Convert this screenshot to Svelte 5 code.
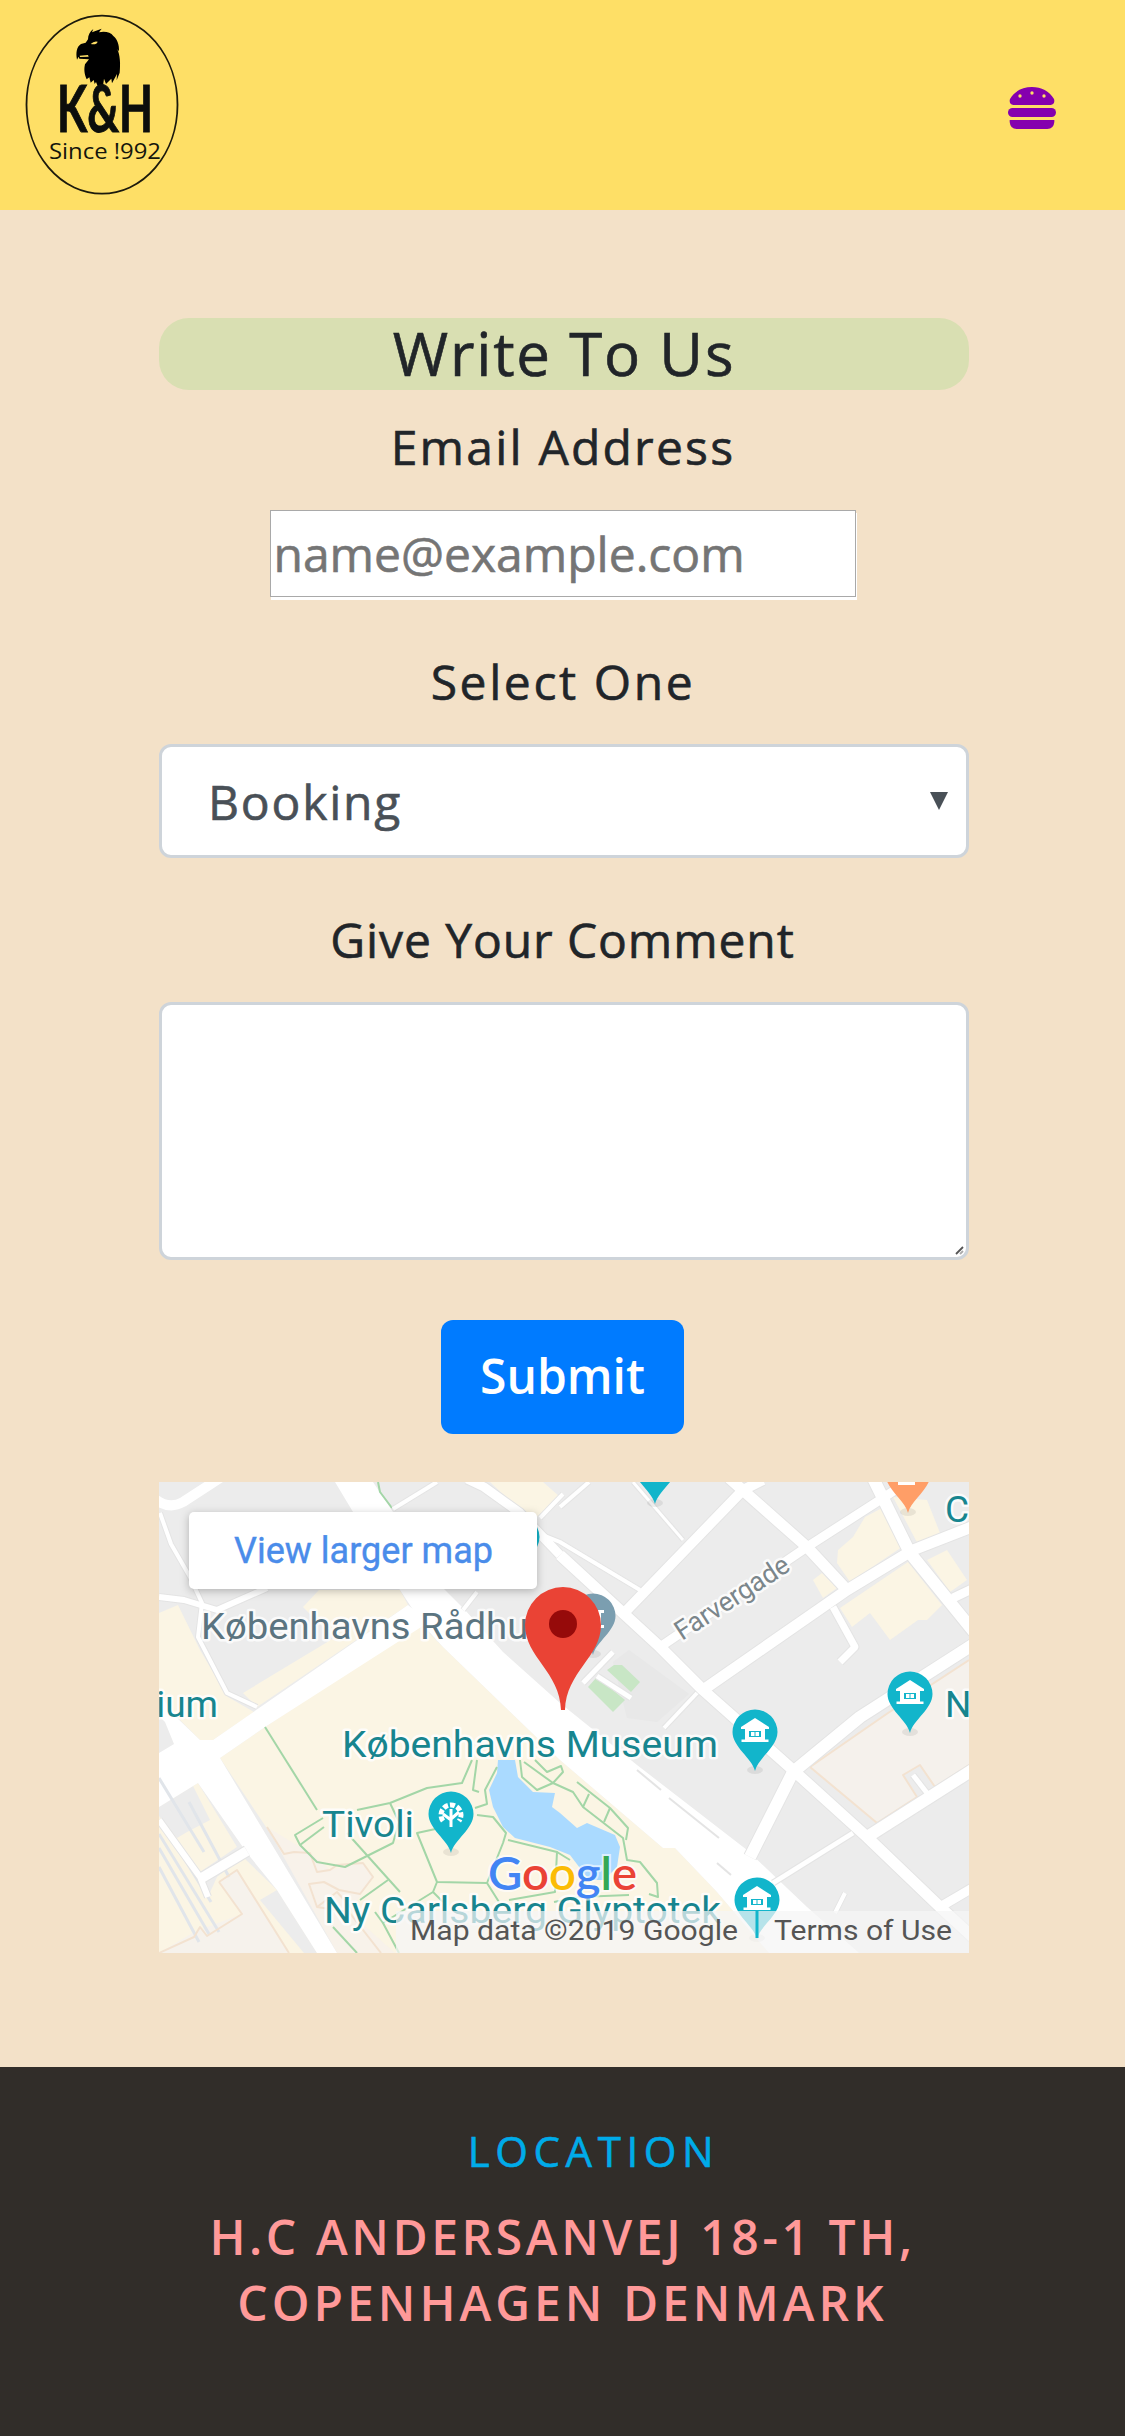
<script>
  let email = $state('');
  let comment = $state('');

  // Filled blocks of the map: colour and outline
  const blocks = [
    ['#fbf5e4', '262,143 106,245 61,276 191,471 610,471 558,410 516,366 504,366 401,278 284,165'],
    ['#fbf5e4', '84,211 175,156 144,125 160,108 241,108 249,123 98,225'],
    ['#fbf5e4', '0,131 19,123 41,168 69,215 95,230 54,258 41,258 21,238 0,212'],
    ['#fbf5e4', '0,325 39,301 78,365 41,390 0,338'],
    ['#ececec', '0,325 34,304 51,338 28,350 18,356 0,334'],
    ['#fbf5e4', '0,345 41,395 49,415 58,395 84,375 118,408 158,471 0,471'],
    ['#f6f2ec', '60,400 78,388 130,471 0,471 35,450 83,432'],
    ['#ececec', '101,418 118,408 158,471 145,471'],
    ['#f8f2ea', '108,345 151,371 171,388 204,381 214,395 190,430 236,471 178,471'],
    ['#fbf5e4', '331,0 384,0 401,15 381,35 361,28'],
    ['#fbf5e4', '723,26 743,65 691,100 678,81 679,68 694,55 706,35'],
    ['#fbf5e4', '734,15 768,18 781,51 761,66'],
    ['#fbf5e4', '768,78 788,68 808,98 791,110'],
    ['#fbf5e4', '681,126 749,80 783,123 768,138 759,138 731,158 711,131 693,145'],
    ['#fbf5e4', '654,98 663,91 678,106 664,116'],
    ['#f5f1ec', '651,285 729,231 810,178 810,283 776,305 761,283 744,293 758,315 718,341'],
    ['#e8e8e8', '454,180 470,168 530,212 498,240 468,236'],
    ['#fff', '176,0 214,0 234,30 283,105 306,128 344,170 401,221 478,283 588,368 648,425 700,471 610,471 558,410 516,366 504,366 401,278 284,165 264,143 241,108'],
    ['#fff', '249,123 54,258 41,258 15,233 0,210 0,325 39,301 88,371 118,408 158,471 178,471 61,276 106,245 270,140'],
    ['#ececec', '0,234 6,240 15,262 0,271'],
    ['#c8e6c5', '448,188 455,183 463,183 481,200 472,210'],
    ['#c8e6c5', '429,205 438,195 466,218 454,230'],
    ['#aadaff', '339,278 356,278 359,295 374,310 396,311 393,325 401,331 418,346 428,341 456,353 461,365 458,385 445,398 430,398 411,373 391,365 356,356 344,345 334,325 330,308 338,291']
  ];

  // Streets: width and points
  const streets = [
    [4, '1,31 12,62 31,95 43,121 39,155 68,211 98,225'],
    [6, '0,115 25,118 58,128 108,106'],
    [4, '278,0 234,27'],
    [9, '308,-3 325,5 361,31 401,73'],
    [11, '401,73 501,165 544,208 634,288 708,355 781,425 830,470'],
    [4, '404,12 381,36'],
    [4, '381,52 401,60 481,108'],
    [4, '401,25 430,0'],
    [3, '474,0 524,58'],
    [10, '468,128 584,8 604,-2'],
    [11, '570,-4 648,65 688,108'],
    [9, '501,165 648,65 724,16 754,-4'],
    [12, '714,-4 751,71 815,150'],
    [11, '544,208 688,108 754,68 815,44'],
    [9, '794,116 815,106'],
    [7, '674,125 696,165 681,180'],
    [12, '815,162 701,235 634,290 591,375'],
    [12, '708,355 815,287'],
    [5, '694,351 614,401'],
    [9, '781,425 815,405'],
    [4, '686,411 676,431'],
    [5, '754,293 768,311'],
    [5, '454,170 424,201'],
    [4, '538,211 505,246'],
    [4, '318,110 304,128'],
    [10, '88,369 41,397'],
    [6, '0,338 41,395 49,415'],
    [5, '438,194 472,216']
  ];

  // Footpaths in the gardens
  const paths = [
    '219,0 221,10 233,26',
    '106,245 158,328',
    '164,336 136,353 141,363 158,380 186,385 234,361 240,340',
    '141,363 165,345',
    '198,328 231,321 268,306 303,301 313,278',
    '231,321 240,340',
    '318,278 314,308 320,310',
    '188,351 241,410',
    '281,346 258,351 278,400 328,401',
    '201,418 229,398',
    '278,400 274,410 224,441 240,471',
    '224,441 216,430',
    '274,410 284,420',
    '318,333 334,335 347,351 344,361 328,401 340,420',
    '316,326 328,322 326,308 338,285',
    '349,358 398,370 396,410 350,418',
    '398,370 411,378',
    '174,445 198,471',
    '361,278 363,295 378,308 394,301 404,290 402,284 388,290 376,278',
    '394,301 414,310 424,325 464,356 468,378 481,380 498,401 499,415 490,412',
    '365,280 394,301',
    '418,300 451,326 469,346 467,358',
    '430,312 424,325',
    '451,326 445,340',
    '395,420 420,415 470,413'
  ];

  const outlines = [
    '651,285 729,231 810,178',
    '651,285 718,341 758,315 744,293 761,283 776,305 810,283',
    '60,400 83,432 48,454 41,445 35,455 0,471',
    '60,400 78,388 130,471',
    '108,345 125,372 135,370 151,371 158,390 171,388 178,383 204,381 214,395 201,412 180,408 165,400 150,402 158,425 190,430 222,471',
    '158,425 178,410 205,440'
  ];

  const rails = ['0,352 60,450', '0,366 50,452', '0,385 40,460', '10,352 52,420', '30,320 70,395', '0,296 45,370'];

  const museums = [
    [596, 250],
    [751, 212],
    [598, 418]
  ];
</script>

<svelte:head><title>K&amp;H – Contact</title></svelte:head>

{#snippet pin(x, y, color)}
  <ellipse cx={x} cy={y + 38} rx="8" ry="4" fill="#000" opacity="0.07" />
  <path transform="translate({x} {y})" fill={color} d="M0 39C-3 26-22.500 15-22.500 0A22.500 22.500 0 0 1 22.500 0C22.500 15 3 26 0 39Z" />
{/snippet}

<header>
  <svg class="logo" viewBox="0 0 220 210" role="img" aria-label="K&H since 1992">
    <ellipse cx="102" cy="104.700" rx="75.500" ry="89" fill="none" stroke="#1c1a0c" stroke-width="1.800" />
    <g transform="scale(.33333)">
      <path d="M264 118C264 105 270 94 280 87L276 97L305 86L297 97C315 93 332 97 340 108C352 118 358 134 357 154L352 148C360 166 362 190 359 218L350 241L351 222L336 250L334 236L318 252L312 236L309 258L299 266L292 256L288 246L284 252L281 240L272 248L268 232L260 238C252 220 252 206 255 193L267 178L238 176L236 170L231 179C227 158 230 140 243 132L257 128Z" />
      <path d="M272 132Q282 122 293 125Q289 136 272 132ZM239 167L264 165L266 170L240 171Z" fill="#fedf66" />
    </g>
    <text class="brand" x="57" y="131.500" textLength="96" lengthAdjust="spacingAndGlyphs">K&amp;H</text>
    <text class="since" x="49" y="158.500" textLength="112" lengthAdjust="spacingAndGlyphs">Since !992</text>
  </svg>
  <button class="menu" aria-label="Menu">
    <svg viewBox="0 0 144 126">
      <path fill-rule="evenodd" d="M16 54C7 54 3 46 6 36C20 12 44 0 72 0S124 12 138 36C141 46 137 54 128 54ZM72 13a5 5 0 1 0 0 10a5 5 0 1 0 0-10ZM36 22a5 5 0 1 0 0 10a5 5 0 1 0 0-10ZM108 22a5 5 0 1 0 0 10a5 5 0 1 0 0-10Z" />
      <rect y="63" width="144" height="27" rx="13.500" />
      <path d="M5 99H139V105Q137 126 118 126H26Q7 126 5 105Z" />
    </svg>
  </button>
</header>

<main>
  <h1>Write To Us</h1>
  <form>
    <label class="email-label" for="email">Email Address</label>
    <input id="email" type="email" placeholder="name@example.com" bind:value={email} />

    <label class="topic-label" for="topic">Select One</label>
    <button id="topic" class="select" type="button"><span>Booking</span><i></i></button>

    <label class="comment-label" for="comment">Give Your Comment</label>
    <div class="area">
      <textarea id="comment" bind:value={comment}></textarea>
      <svg class="grip" viewBox="0 0 9 9"><path d="M1 8L8 1" stroke="#555" stroke-width="1.800" /><path d="M5 8L8 5" stroke="#aaa" stroke-width="1.800" /></svg>
    </div>

    <button class="submit" type="button">Submit</button>
  </form>

  <svg class="map" viewBox="0 0 810 471">
    <rect width="810" height="471" fill="#ececec" />
    {#each blocks as [fill, points]}<polygon {fill} {points} />{/each}
    {#each rails as points}<polyline class="rail" {points} />{/each}
    {#each outlines as points}<polyline class="outline" {points} />{/each}
    {#each paths as points}<polyline class="path" {points} />{/each}
    {#each streets as [w, points]}<polyline class="edge" stroke-width={w + 2} {points} />{/each}
    <path class="street" stroke-width="10" d="M-4 17Q10 28 24 20L64-6" />
    {#each streets as [w, points]}<polyline class="street" stroke-width={w} {points} />{/each}
    <path d="M478 288L502 308M510 316L560 356M558 381L572 393" stroke="#e4e4e4" stroke-width="2" />

    {@render pin(496, -17, '#12b5cb')}
    {@render pin(749, -8, '#ff9e67')}
    <rect x="739" y="-4" width="17" height="7" fill="#fff" />
    {@render pin(434, 134, '#7b9eb0')}
    <path d="M434 128h11v3h-3v12h3v3h-11z" fill="#fff" />
    {@render pin(292, 332, '#12b5cb')}
    <g stroke="#fff" fill="none" stroke-width="3">
      <path d="M292 345V327M292 338L284 332M292 337L300 330" />
      <path stroke-width="5" stroke-dasharray="5 2" d="M284 339A10 10 0 1 1 300 339" />
    </g>
    {#each museums as [x, y]}
      {@render pin(x, y, '#12b5cb')}
      <g transform="translate({x} {y})" fill="#fff">
        <path d="M0-14L14-5V-3H-14V-5Z" />
        <path fill-rule="evenodd" d="M-10-4H10V8H-10ZM-6-1V5H6V-1Z" />
        <rect x="-4" width="3.500" height="4" /><rect x="0.500" width="3.500" height="4" />
        <rect x="-13.500" y="7.500" width="27" height="2.500" />
      </g>
    {/each}

    <g class="place">
      <text x="42" y="157" fill="#5b7480" textLength="347" lengthAdjust="spacingAndGlyphs">Københavns Rådhus</text>
      <text x="59" y="235" text-anchor="end">ium</text>
      <text x="183" y="274.500" textLength="376" lengthAdjust="spacingAndGlyphs">Københavns Museum</text>
      <text x="163" y="355" textLength="92" lengthAdjust="spacingAndGlyphs">Tivoli</text>
      <text x="165" y="441" textLength="397" lengthAdjust="spacingAndGlyphs">Ny Carlsberg Glyptotek</text>
      <text x="786" y="40">C</text>
      <text x="786" y="235">N</text>
    </g>
    <text class="lane" transform="translate(523 159) rotate(-33)" textLength="131" lengthAdjust="spacingAndGlyphs">Farvergade</text>

    <path fill="#ea4335" d="M402 228C401 190 366 175 366 143A38 38 0 0 1 442 143C442 175 407 190 406 228Z" />
    <circle cx="404" cy="142" r="14" fill="#960a0a" />

    <rect x="237" y="429" width="573" height="42" fill="#f5f5f5" opacity="0.720" />
    <rect x="596.500" y="429" width="3" height="27" fill="#12b5cb" />
    <text class="google" x="329" y="407.500" textLength="149" lengthAdjust="spacingAndGlyphs"><tspan fill="#4285f4">G</tspan><tspan fill="#ea4335">o</tspan><tspan fill="#fbbc05">o</tspan><tspan fill="#4285f4">g</tspan><tspan fill="#34a853">l</tspan><tspan fill="#ea4335">e</tspan></text>
    <text class="legal" x="251" y="458" textLength="328" lengthAdjust="spacingAndGlyphs">Map data ©2019 Google</text>
    <text class="legal" x="615" y="458" textLength="178" lengthAdjust="spacingAndGlyphs">Terms of Use</text>

    <path d="M378 45Q383 55 378 65Z" fill="#12b5cb" />
    <rect class="card" x="30" y="30" width="348" height="77" rx="5" />
    <text class="larger" x="75" y="81" textLength="259">View larger map</text>
  </svg>
</main>

<footer>
  <h2>LOCATION</h2>
  <p class="street-line">H.C ANDERSANVEJ 18-1 TH,</p>
  <p class="city-line">COPENHAGEN DENMARK</p>
</footer>

<style>
  :global(body) {
    background: #f3e1c8;
    font-family: 'Open Sans', 'Noto Sans', sans-serif;
    color: #212529;
  }
  header {
    height: 210px;
    background: #fedf66;
    display: flex;
    justify-content: space-between;
  }
  .logo { width: 220px; height: 210px; }
  .brand { font: 700 65px Lato, sans-serif; fill: #0c0e0c; stroke: #0c0e0c; stroke-width: 1px; }
  .since { font: 500 21px 'Open Sans', sans-serif; fill: #14150c; }
  .menu {
    border: 0;
    background: none;
    padding: 0;
    margin: 87px 69px 0 0;
    width: 48px;
    height: 42px;
  }
  .menu svg { display: block; width: 48px; height: 42px; fill: #8500ae; }

  main {
    width: 810px;
    padding: 108px 156px 114px 159px;
    display: flex;
    flex-direction: column;
  }
  h1 {
    margin: 0 0 21px;
    font-size: 60px;
    font-weight: 400;
    line-height: 71px;
    height: 72px;
    letter-spacing: 1.8px;
    text-align: center;
    background: #d9dfb2;
    border-radius: 30px;
  }
  h1, label, input, .select { -webkit-text-stroke-width: 0.6px; }
  form { display: flex; flex-direction: column; align-items: center; }
  label { font-size: 48px; line-height: 72px; margin-right: 2px; }
  .email-label { letter-spacing: 2.2px; margin-bottom: 27px; }
  .topic-label { letter-spacing: 2.6px; margin: 49px 2px 26px 0; }
  .comment-label { letter-spacing: 0.9px; margin: 46px 3px 26px 0; }
  input {
    box-sizing: border-box;
    width: 586px;
    height: 87px;
    margin: 0 3px 0 0;
    padding: 0 0 0 3px;
    border: 1px solid #a9a9a9;
    background: #fff;
    box-shadow: 1px 3px 0 #fff;
    font: 48px 'Open Sans', sans-serif;
    border-radius: 0;
  }
  input::placeholder { color: #757575; opacity: 1; }
  .select {
    box-sizing: border-box;
    width: 810px;
    height: 114px;
    padding: 0 18px 0 46px;
    border: 3px solid #ced4da;
    border-radius: 12px;
    background: #fff;
    color: #495057;
    font: 48px 'Open Sans', sans-serif;
    letter-spacing: 1.8px;
    display: flex;
    align-items: center;
    justify-content: space-between;
  }
  .select i {
    border: 9px solid transparent;
    border-top: 18px solid #495057;
    border-bottom: 0;
  }
  .area { position: relative; width: 810px; height: 258px; }
  textarea {
    box-sizing: border-box;
    display: block;
    width: 810px;
    height: 258px;
    border: 3px solid #ced4da;
    border-radius: 12px;
    background: #fff;
    resize: none;
  }
  .grip { position: absolute; right: 5px; bottom: 5px; width: 9px; height: 9px; }
  .submit {
    width: 243px;
    height: 114px;
    margin: 60px 3px 48px 0;
    padding: 0 0 4px;
    border: 0;
    border-radius: 12px;
    background: #007bff;
    color: #fff;
    font: 600 48px 'Open Sans', sans-serif;
  }

  .map { display: block; width: 810px; height: 471px; font-family: Roboto, sans-serif; }
  .street, .edge, .path, .rail, .outline { fill: none; stroke-linejoin: round; }
  .street { stroke: #fff; }
  .edge { stroke: #e4e4e4; }
  .path { stroke: #a3d6a7; stroke-width: 2; }
  .rail { stroke: #e1e5ea; stroke-width: 3; }
  .outline { stroke: #f3e2d0; stroke-width: 2; }
  .place text, .lane { paint-order: stroke; stroke: #fff; stroke-opacity: 0.8; stroke-width: 5px; stroke-linejoin: round; }
  .place { font-size: 37px; fill: #17858f; }
  .lane { font-size: 27px; fill: #7b868b; }
  .google { font: 600 46px Lato, sans-serif; paint-order: stroke; stroke: #fff; stroke-opacity: 0.6; stroke-width: 4px; }
  .legal { font-size: 28px; fill: #555; }
  .card { fill: #fff; filter: drop-shadow(0 2px 4px rgba(0, 0, 0, 0.25)); }
  .larger { font-size: 36px; fill: #4a8cea; stroke: #4a8cea; stroke-width: 0.4px; }

  footer {
    box-sizing: border-box;
    height: 369px;
    padding: 54px 0 0;
    background: #312d29;
    text-align: center;
  }
  h2 {
    margin: 0 0 23px;
    padding-left: 62px;
    color: #00abe9;
    font-size: 42px;
    font-weight: 400;
    line-height: 60px;
    letter-spacing: 5.6px;
    -webkit-text-stroke-width: 0.6px;
  }
  p { margin: 0; font-size: 48px; font-weight: 600; line-height: 66px; color: #ff9999; }
  .street-line { letter-spacing: 3.6px; }
  .city-line { letter-spacing: 4px; }
</style>
